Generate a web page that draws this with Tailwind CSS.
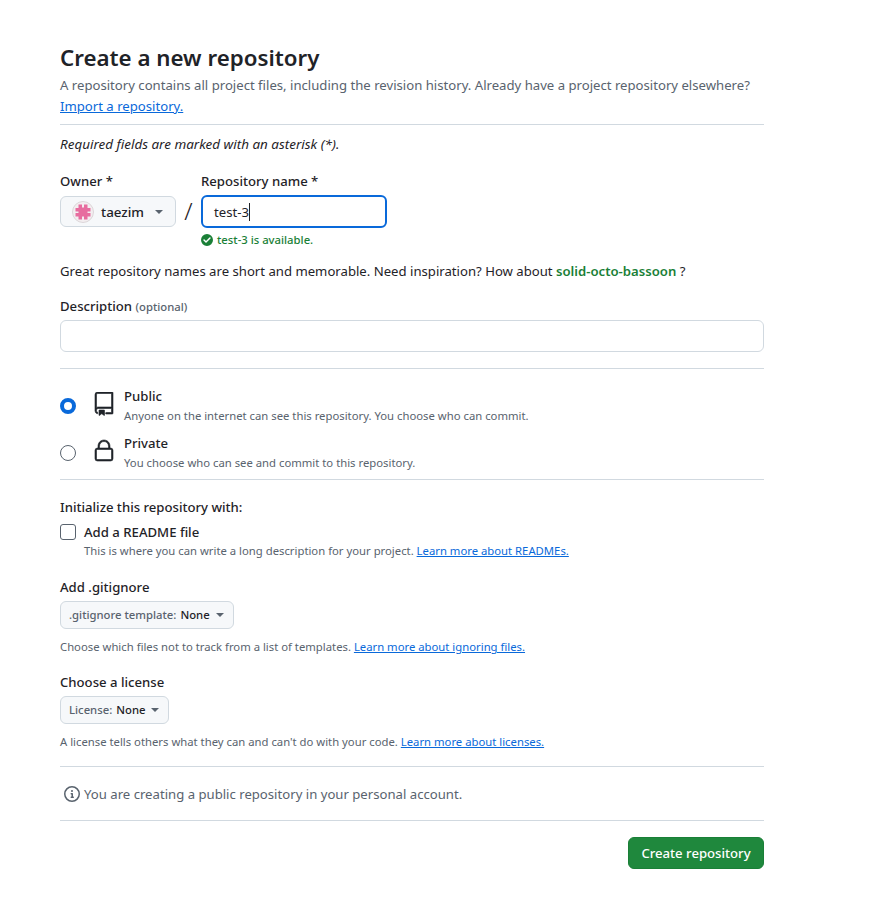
<!DOCTYPE html>
<html lang="en">
<head>
  <meta charset="UTF-8">
  <title>Create a new repository</title>
  <script src="https://cdn.jsdelivr.net/npm/@tailwindcss/browser@4"></script>
</head>
<body class="bg-white text-[#1f2328] font-['Noto_Sans',sans-serif] text-[13.15px] leading-[20px]">
  <main class="w-[704px] ml-[60px] pt-[43px]">
    <!-- heading -->
    <div class="pb-[8px] border-b border-[#d1d9e0]">
      <h1 class="text-[22.3px] leading-[30px] font-semibold">Create a new repository</h1>
      <p class="text-[#59636e] mt-[2px] whitespace-nowrap">A repository contains all project files, including the revision history. Already have a project repository elsewhere?</p>
      <a class="text-[#0969da] underline block mt-[1px]">Import a repository.</a>
    </div>
    <p class="italic mt-[9px] text-[13.45px]">Required fields are marked with an asterisk (*).</p>

    <!-- owner / name -->
    <div class="flex mt-[17px]">
      <div>
        <div class="font-medium h-[20px]">Owner *</div>
        <div class="mt-[5px] w-[116px] h-[31px] flex items-center bg-[#f6f8fa] border border-[#d1d9e0] rounded-md pl-[11px]">
          <svg width="22" height="22" viewBox="0 0 22 22" class="shrink-0">
            <circle cx="11" cy="11" r="10.5" fill="#f3eef0" stroke="#dcd6d9"/>
            <path d="M6.500 3.500h3.500v3h2v-3h3.500v3.500h3v3.500h-3v1.500h3v3.500h-3v3h-3.500v-3h-2v3H6.500v-3h-3v-3.500h3v-1.500h-3V7h3Z" fill="#e76d9f"/>
          </svg>
          <span class="ml-[7px] font-medium text-[13.4px]">taezim</span>
          <span class="ml-[11px] w-0 h-0 border-x-[4px] border-x-transparent border-t-[4px] border-t-[#59636e]"></span>
        </div>
      </div>
      <div class="w-[25px] flex justify-center items-start text-[24px] leading-[32px] pt-[24px] font-light">/</div>
      <div>
        <div class="font-medium h-[20px]">Repository name *</div>
        <div class="mt-[4px] w-[186px] h-[33px] flex items-center border-2 border-[#0969da] rounded-md pl-[11px]">
          <span>test-3</span><span class="w-px h-[18px] bg-[#1f2328]"></span>
        </div>
        <div class="flex items-center mt-[4px] text-[11.3px] leading-[16px] font-medium text-[#1a7f37]">
          <svg width="12" height="12" viewBox="0 0 12 12" fill="#1a7f37"><path d="M6 0a6 6 0 1 1 0 12A6 6 0 0 1 6 0Zm-.5 8.500 4-4a.75.75 0 0 0-1.06-1.06L5 6.880 3.560 5.440A.75.75 0 0 0 2.500 6.500l2 2a.75.75 0 0 0 1 0Z"/></svg>
          <span class="ml-[4px]">test-3 is available.</span>
        </div>
      </div>
    </div>
    <p class="mt-[13px] text-[#1f2328]">Great repository names are short and memorable. Need inspiration? How about <span class="font-semibold text-[#1a7f37]">solid-octo-bassoon</span> ?</p>

    <!-- description -->
    <div class="mt-[15px] font-medium">Description <span class="text-[11.3px] text-[#59636e]">(optional)</span></div>
    <div class="mt-[3px] h-[32px] border border-[#d1d9e0] rounded-md"></div>
    <div class="mt-[16px] border-t border-[#d1d9e0]"></div>

    <!-- visibility -->
    <div class="flex mt-[17px] h-[36px]">
      <span class="mt-[12px] w-[16px] h-[16px] rounded-full border-[4px] border-[#0969da] bg-white shrink-0"></span>
      <svg width="24" height="24" viewBox="0 0 24 24" fill="#1f2328" stroke="#1f2328" stroke-width=".6" class="ml-[16px] mt-[6px] shrink-0"><path d="M3 2.750A2.750 2.750 0 0 1 5.750 0h14.500a.75.75 0 0 1 .75.75v20.500a.75.75 0 0 1-.75.75h-6a.75.75 0 0 1 0-1.500h5.250v-4H6A1.500 1.500 0 0 0 4.500 18v.75c0 .716.43 1.334 1.050 1.605a.75.75 0 0 1-.6 1.374A3.251 3.251 0 0 1 3 18.750ZM19.500 1.500H5.750c-.69 0-1.250.56-1.250 1.250v12.651A2.989 2.989 0 0 1 6 15h13.500Z"/><path d="M7 18.250a.25.25 0 0 1 .25-.25h5a.25.25 0 0 1 .25.25v5.010a.25.25 0 0 1-.397.201l-2.206-1.604a.25.25 0 0 0-.294 0L7.397 23.460a.25.25 0 0 1-.397-.2Z"/></svg>
      <div class="ml-[8px]">
        <div class="font-medium">Public</div>
        <div class="text-[11.3px] leading-[20px] text-[#59636e]">Anyone on the internet can see this repository. You choose who can commit.</div>
      </div>
    </div>
    <div class="flex mt-[11px] h-[36px]">
      <span class="mt-[12px] w-[16px] h-[16px] rounded-full border border-[#59636e] bg-white shrink-0"></span>
      <svg width="24" height="24" viewBox="0 0 24 24" fill="#1f2328" stroke="#1f2328" stroke-width=".6" class="ml-[16px] mt-[6px] shrink-0"><path d="M6 9V7.250C6 3.845 8.503 1 12 1s6 2.845 6 6.250V9h.5a2.500 2.500 0 0 1 2.500 2.500v8a2.500 2.500 0 0 1-2.500 2.500h-13A2.500 2.500 0 0 1 3 19.500v-8A2.500 2.500 0 0 1 5.500 9Zm-1.500 2.500v8a1 1 0 0 0 1 1h13a1 1 0 0 0 1-1v-8a1 1 0 0 0-1-1h-13a1 1 0 0 0-1 1Zm3-4.250V9h9V7.250c0-2.670-1.922-4.750-4.500-4.750-2.578 0-4.500 2.080-4.500 4.750Z"/></svg>
      <div class="ml-[8px]">
        <div class="font-medium">Private</div>
        <div class="text-[11.3px] leading-[20px] text-[#59636e]">You choose who can see and commit to this repository.</div>
      </div>
    </div>
    <div class="mt-[10px] border-t border-[#d1d9e0]"></div>

    <!-- init -->
    <div class="mt-[17px] font-medium">Initialize this repository with:</div>
    <div class="flex items-center mt-[5px]">
      <span class="w-[16px] h-[16px] border border-[#59636e] rounded-[3px] bg-white"></span>
      <span class="ml-[8px] font-medium">Add a README file</span>
    </div>
    <p class="ml-[24px] text-[11.3px] leading-[18px] text-[#59636e]">This is where you can write a long description for your project. <a class="text-[#0969da] underline">Learn more about READMEs.</a></p>

    <div class="mt-[17px] font-medium">Add .gitignore</div>
    <div class="mt-[4px] flex items-center h-[28px] w-[174px] px-[8px] bg-[#f6f8fa] border border-[#d1d9e0] rounded-md text-[11.3px] font-medium whitespace-nowrap">
      <span class="text-[#59636e]">.gitignore template:</span><span class="ml-[4px]">None</span>
      <span class="ml-auto mr-[1px] w-0 h-0 border-x-[4px] border-x-transparent border-t-[4px] border-t-[#59636e]"></span>
    </div>
    <p class="mt-[9px] text-[11.3px] leading-[18px] text-[#59636e]">Choose which files not to track from a list of templates. <a class="text-[#0969da] underline">Learn more about ignoring files.</a></p>

    <div class="mt-[16px] font-medium">Choose a license</div>
    <div class="mt-[4px] flex items-center h-[28px] w-[109px] px-[8px] bg-[#f6f8fa] border border-[#d1d9e0] rounded-md text-[11.3px] font-medium whitespace-nowrap">
      <span class="text-[#59636e]">License:</span><span class="ml-[4px]">None</span>
      <span class="ml-auto mr-[1px] w-0 h-0 border-x-[4px] border-x-transparent border-t-[4px] border-t-[#59636e]"></span>
    </div>
    <p class="mt-[9px] text-[11.3px] leading-[18px] text-[#59636e]">A license tells others what they can and can't do with your code. <a class="text-[#0969da] underline">Learn more about licenses.</a></p>

    <div class="mt-[15px] border-t border-[#d1d9e0]"></div>
    <div class="flex items-center mt-[17px] pl-[4px] text-[#59636e]">
      <svg width="16" height="16" viewBox="0 0 16 16" fill="#59636e"><path d="M0 8a8 8 0 1 1 16 0A8 8 0 0 1 0 8Zm8-6.500a6.500 6.500 0 1 0 0 13 6.500 6.500 0 0 0 0-13ZM6.500 7.750A.75.75 0 0 1 7.250 7h1a.75.75 0 0 1 .75.75v2.750h.25a.75.75 0 0 1 0 1.500h-2a.75.75 0 0 1 0-1.500h.25v-2h-.25a.75.75 0 0 1-.75-.75ZM8 6a1 1 0 1 1 0-2 1 1 0 0 1 0 2Z"/></svg>
      <span class="ml-[4px]">You are creating a public repository in your personal account.</span>
    </div>
    <div class="mt-[16px] border-t border-[#d1d9e0]"></div>
    <div class="flex justify-end mt-[16px]">
      <button class="w-[136px] h-[32px] bg-[#1f883d] text-white font-medium rounded-md border border-[#1a7f37]">Create repository</button>
    </div>
  </main>
</body>
</html>
